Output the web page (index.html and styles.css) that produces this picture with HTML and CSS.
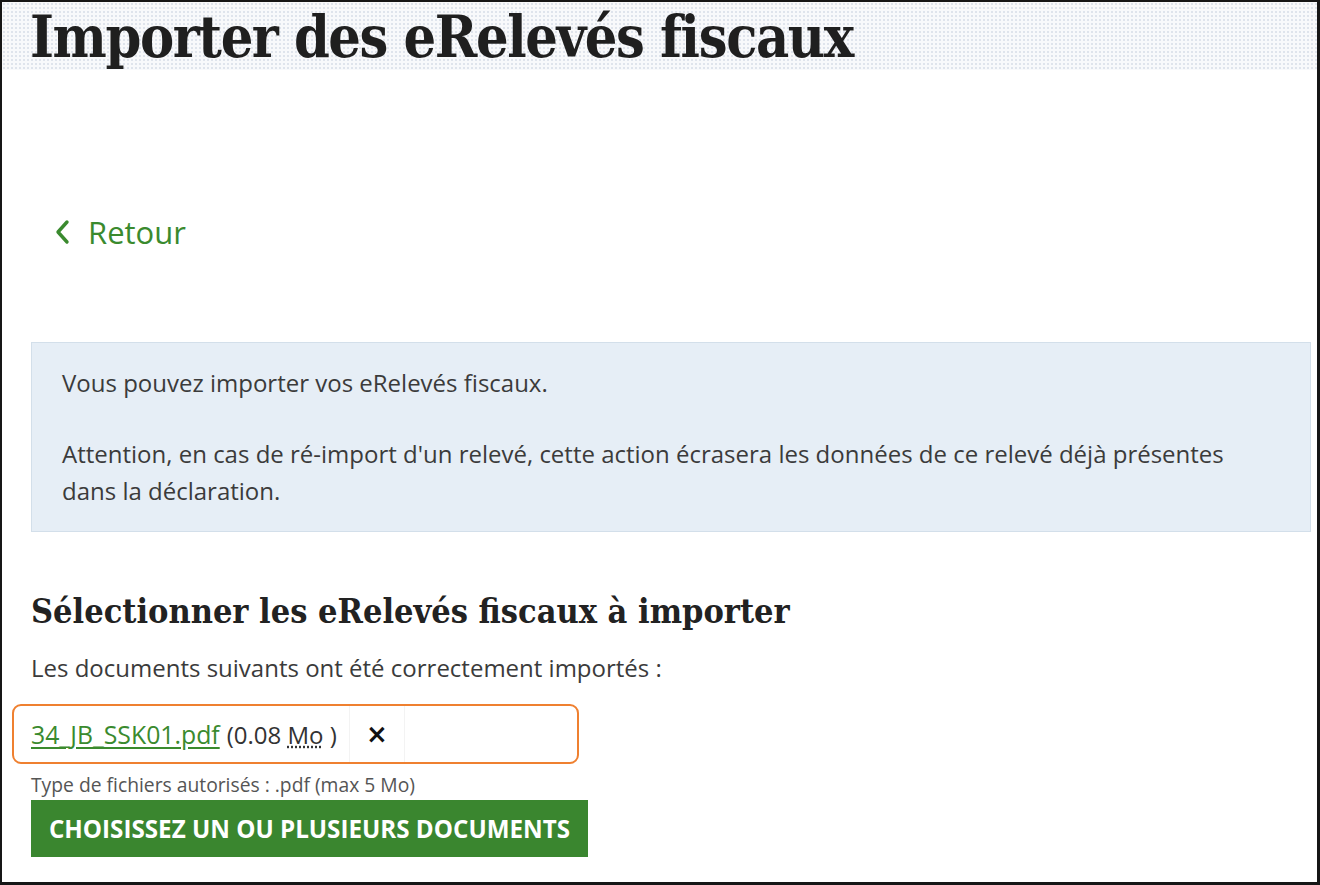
FILE: index.html
```html
<!DOCTYPE html>
<html lang="fr">
<head>
<meta charset="utf-8">
<title>Importer des eRelevés fiscaux</title>
<link rel="stylesheet" href="styles.css">
</head>
<body>
<div class="frame">
  <header class="page-head">
    <h1 class="title">Importer des eRelevés fiscaux</h1>
  </header>
  <main class="content">
    <a class="back" href="#">
      <svg class="back-icon" viewBox="0 0 16 26" width="16" height="26" aria-hidden="true"><path d="M13 3 L4 13 L13 23" fill="none" stroke="#3a8a2e" stroke-width="3.4" stroke-linecap="round" stroke-linejoin="round"/></svg>
      <span>Retour</span>
    </a>
    <div class="info">
      <p>Vous pouvez importer vos eRelevés fiscaux.</p>
      <p>Attention, en cas de ré-import d'un relevé, cette action écrasera les données de ce relevé déjà présentes dans la déclaration.</p>
    </div>
    <h2 class="subtitle">Sélectionner les eRelevés fiscaux à importer</h2>
    <p class="lead">Les documents suivants ont été correctement importés :</p>
    <div class="files">
      <a class="file-link" href="#">34_JB_SSK01.pdf</a>
      <span class="file-size">(0.08 <abbr title="Mégaoctet">Mo</abbr> )</span>
      <button class="remove" type="button" aria-label="Supprimer">×</button>
    </div>
    <p class="hint">Type de fichiers autorisés : .pdf (max 5 Mo)</p>
    <button class="choose" type="button">CHOISISSEZ UN OU PLUSIEURS DOCUMENTS</button>
  </main>
</div>
</body>
</html>
```
FILE: styles.css
```css
* { box-sizing: border-box; }
html, body { margin: 0; padding: 0; background: #fff; }
body { font-family: "Open Sans", "Liberation Sans", sans-serif; color: #333; }

.frame {
  width: 1320px;
  height: 885px;
  border: 2px solid #161616;
  border-right-width: 3px;
  border-bottom-width: 3px;
  overflow: hidden;
}

.page-head {
  height: 68px;
  background-color: #f8f9fb;
  background-image: radial-gradient(circle, #dfe4ec 0.9px, transparent 1.1px);
  background-size: 4px 4px;
  padding-left: 28px;
}
.title {
  margin: 0;
  font-family: "DejaVu Serif", serif;
  font-weight: bold;
  font-stretch: condensed;
  font-size: 57px;
  line-height: 72px;
  color: #1f1f1f;
  letter-spacing: -1.4px;
  position: relative;
  top: -1px;
}

.content { padding: 0 0 0 29px; }

.back {
  display: inline-flex;
  align-items: center;
  gap: 18px;
  margin: 142px 0 0 23px;
  color: #3a8a2e;
  text-decoration: none;
  font-size: 31px;
  line-height: 40px;
}
.back-icon { display: block; }

.info {
  margin: 90px 6px 0 0;
  background: #e6eef6;
  border: 1px solid #d3dfea;
  padding: 21px 30px 22px;
  font-size: 24px;
  line-height: 37px;
  color: #3b3b3b;
}
.info p { margin: 0; }
.info p + p { margin-top: 34px; }

.subtitle {
  margin: 59px 0 0;
  font-family: "DejaVu Serif", serif;
  font-stretch: condensed;
  font-weight: bold;
  font-size: 34px;
  line-height: 40px;
  color: #222;
}
.lead {
  margin: 22px 0 0;
  font-size: 24px;
  line-height: 30px;
  color: #3b3b3b;
}

.files {
  display: flex;
  align-items: center;
  width: 567px;
  height: 60px;
  margin: 21px 0 0 -19px;
  border: 2px solid #ef8030;
  border-radius: 9px;
  padding-left: 17px;
  font-size: 24px;
  color: #333;
}
.file-link {
  color: #3a8a2e;
  font-size: 24.8px;
  text-decoration: underline;
  text-underline-offset: 3px;
}
.file-size { margin-left: 7px; }
.file-size abbr {
  text-decoration: underline dotted;
  text-underline-offset: 3px;
}
.remove {
  margin-left: 12px;
  width: 56px;
  height: 56px;
  border: none;
  border-left: 1px solid #f3f3f3;
  border-right: 1px solid #f3f3f3;
  background: #fff;
  font-family: "DejaVu Sans", sans-serif;
  font-size: 26px;
  font-weight: bold;
  color: #111;
  padding: 0;
}

.hint {
  margin: 9px 0 0;
  font-size: 19.3px;
  line-height: 24px;
  color: #555;
}
.choose {
  display: block;
  margin-top: 3px;
  width: 557px;
  height: 57px;
  border: none;
  background: #3a862f;
  color: #fff;
  font-family: "Open Sans", sans-serif;
  font-weight: bold;
  font-size: 24.2px;
  padding: 0;
}
```
